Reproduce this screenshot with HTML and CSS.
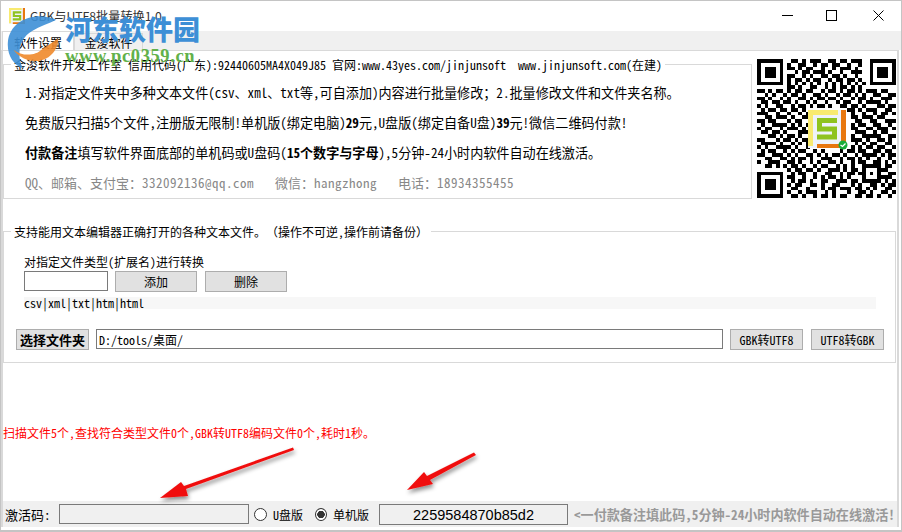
FILE: index.html
```html
<!DOCTYPE html>
<html lang="zh-CN">
<head>
  <meta charset="UTF-8" />
  <title>GBK与UTF8批量转换1.0</title>
  <link rel="stylesheet" href="styles.css">
</head>
<body>

  <svg class="defs" width="0" height="0">
    <symbol id="logoS" viewBox="0 0 38 38">
      <rect width="38" height="38" fill="#eef2fa"/>
      <path d="M0 0H30V5H5V36H0z" fill="#f8ea70"/>
      <path d="M33 0h5v38H9v-4H33z" fill="#e8770f"/>
      <path d="M29 10.5H11.5V19H26.5V27H9" fill="none" stroke="#8fc31f" stroke-width="5"/>
    </symbol>
  </svg>

  <div class="window">
    <div class="titlebar">
      <svg class="app-icon"><use href="#logoS"/></svg>
      <span class="app-title">GBK与UTF8批量转换1.0</span>
      <div class="win-btns">
        <svg class="win-btn" viewBox="0 0 12 12"><path d="M0 5.5h11" stroke="#000"/></svg>
        <svg class="win-btn" viewBox="0 0 12 12"><rect x="0.5" y="0.5" width="10" height="10" fill="none" stroke="#000"/></svg>
        <svg class="win-btn" viewBox="0 0 12 12"><path d="M0.5 0.5l10 10M10.5 0.5l-10 10" stroke="#000"/></svg>
      </div>
    </div>

    <div class="tabs">
      <div class="tab active">软件设置</div>
      <div class="tab">金浚软件</div>
    </div>

    <div class="panel">
      <div class="top-row">
        <fieldset class="group info">
          <legend>金浚软件开发工作室 信用代码(广东):92440605MA4X049J85 官网:www.43yes.com/jinjunsoft&nbsp; www.jinjunsoft.com(在建)</legend>
          <p>1.对指定文件夹中多种文本文件(csv、xml、txt等,可自添加)内容进行批量修改；2.批量修改文件和文件夹名称。</p>
          <p>免费版只扫描5个文件,注册版无限制!单机版(绑定电脑)<b>29</b>元,U盘版(绑定自备U盘)<b>39</b>元!微信二维码付款!</p>
          <p><b>付款备注</b>填写软件界面底部的单机码或U盘码(<b>15个数字与字母</b>),5分钟-24小时内软件自动在线激活。</p>
          <p class="contact">QQ、邮箱、支付宝：<span class="wide">332092136@qq.com&nbsp;&nbsp;&nbsp;</span>微信：<span class="wide">hangzhong&nbsp;&nbsp;&nbsp;</span>电话：<span class="wide">18934355455</span></p>
        </fieldset>
        <div class="qr">
          <svg class="qr-code" viewBox="0 0 37 37" shape-rendering="crispEdges"><path id="qrPath" d=""/></svg>
          <svg class="qr-logo"><use href="#logoS"/></svg>
          <svg class="qr-check" viewBox="0 0 10 10">
            <circle cx="5" cy="5" r="4.5" fill="#1aad3a"/>
            <path d="M2.5 5l2 1.5 3-3" fill="none" stroke="#fff" stroke-width="1.3"/>
          </svg>
        </div>
      </div>

      <fieldset class="group convert">
        <legend>支持能用文本编辑器正确打开的各种文本文件。（操作不可逆,操作前请备份）</legend>
        <div class="types">
          <div class="types-label">对指定文件类型(扩展名)进行转换</div>
          <div class="add-row">
            <input class="field ext-input" type="text" />
            <button class="btn add-btn">添加</button>
            <button class="btn add-btn">删除</button>
          </div>
          <div class="ext-list">csv|xml|txt|htm|html</div>
        </div>
        <div class="path-row">
          <button class="btn folder-btn">选择文件夹</button>
          <input class="field path-input" type="text" value="D:/tools/桌面/" />
          <button class="btn conv-btn">GBK转UTF8</button>
          <button class="btn conv-btn">UTF8转GBK</button>
        </div>
      </fieldset>

      <div class="status">扫描文件5个,查找符合类型文件0个,GBK转UTF8编码文件0个,耗时1秒。</div>

      <div class="footer">
        <span class="code-label">激活码:</span>
        <input class="field code-input" type="text" />
        <label class="radio-item"><input type="radio" name="ver" />U盘版</label>
        <label class="radio-item"><input type="radio" name="ver" checked />单机版</label>
        <div class="machine-code">2259584870b85d2</div>
        <span class="hint">&lt;一付款备注填此码,5分钟-24小时内软件自动在线激活!</span>
      </div>
    </div>
  </div>

  <!-- screenshot annotations lying over the window -->
  <svg class="arrows" viewBox="0 0 902 532">
    <defs>
      <filter id="arrowShadow" x="-20%" y="-20%" width="140%" height="150%">
        <feDropShadow dx="1" dy="3" stdDeviation="2" flood-color="#000" flood-opacity="0.45"/>
      </filter>
    </defs>
    <path filter="url(#arrowShadow)" fill="#f01010" d="M293 447.500L294 450L186 489L188 496L160 498L181 482L184 486z"/>
    <path filter="url(#arrowShadow)" fill="#f01010" d="M474 452.500L476 455L430 480L433 484L407 490L424 472L427 476z"/>
  </svg>

  <div class="watermark">
    <svg class="wm-logo" viewBox="0 0 60 70">
      <path fill="#3d8fd6" opacity="0.9" d="M54 8C32 -2 4 8 2 32C1 46 8 56 18 60C11 46 14 28 28 20C36 15 46 12 54 8z"/>
      <path fill="#ef8a2b" opacity="0.9" d="M56 28C56 42 44 54 28 52C20 51 12 46 8 40C18 48 32 46 38 40C44 36 50 32 56 28z"/>
    </svg>
    <div class="wm-text">
      <div class="wm-name">河东软件园</div>
      <div class="wm-url">www.pc0359.cn</div>
    </div>
  </div>

  <script src="qr.js"></script>
</body>
</html>
```

FILE: styles.css
```css
* {
  box-sizing: border-box;
}

body {
  margin: 0;
  width: 902px;
  height: 532px;
  overflow: hidden;
  position: relative;
  background: #fff;
  color: #000;
  font-family: "Noto Sans Mono CJK SC", "Noto Sans CJK SC", monospace;
  font-size: 12px;
  text-spacing-trim: space-all;
}

.defs {
  position: absolute;
}

.window {
  width: 902px;
  height: 532px;
  border: 1px solid #c4c4c4;
  border-bottom-width: 2px;
  display: flex;
  flex-direction: column;
}

.titlebar {
  height: 30px;
  flex: none;
  display: flex;
  align-items: center;
  padding-left: 8px;
}

.app-icon {
  width: 16px;
  height: 16px;
}

.app-title {
  margin-left: 5px;
  font-family: "Noto Sans CJK SC", sans-serif;
  font-size: 12.200px;
  color: #333;
}

.win-btns {
  margin-left: auto;
  display: flex;
  gap: 32px;
  padding-right: 16px;
}

.win-btn {
  width: 12px;
  height: 12px;
}

.win-btn:last-child {
  margin-left: 3px;
}

.tabs {
  height: 19px;
  flex: none;
  display: flex;
  background: #f0f0f0;
  padding-left: 1px;
}

.tab {
  width: 69px;
  margin-top: 2px;
  text-align: center;
  line-height: 17px;
  border: 1px solid #d9d9d9;
  border-bottom: none;
}

.tab.active {
  width: 72px;
  margin-top: 0;
  background: #fff;
  line-height: 21px;
}

.panel {
  flex: 1;
  display: flex;
  flex-direction: column;
  min-height: 0;
  margin: 0 2px 3px 0;
  border: 1px solid #d9d9d9;
  border-left-width: 2px;
  border-right-width: 2px;
  border-bottom: none;
  border-top-width: 1px;
}

.top-row {
  display: flex;
  align-items: flex-start;
  padding-top: 6px;
}

.group {
  margin: 0;
  padding: 0;
  min-width: 0;
  border: 1px solid #d9d9d9;
}

.group legend {
  margin-left: 7px;
  padding: 0 3px;
  line-height: 15px;
  white-space: nowrap;
}

.info {
  width: 749px;
  height: 142px;
  padding-top: 6px;
}

.info p {
  margin: 0;
  padding-left: 21px;
  height: 30px;
  line-height: 30px;
  font-size: 13.100px;
  white-space: nowrap;
}

.info .contact {
  font-size: 13px;
  color: #888;
  height: 29px;
  line-height: 29px;
}

.wide {
  letter-spacing: 0.500px;
}

.qr {
  position: relative;
  margin: 2px 0 0 5px;
  width: 139px;
  height: 139px;
  flex: none;
}

.qr-code {
  display: block;
  width: 139px;
  height: 139px;
}

.qr-logo {
  position: absolute;
  left: 51px;
  top: 51px;
  width: 38px;
  height: 38px;
}

.qr-check {
  position: absolute;
  left: 81px;
  top: 81px;
  width: 10px;
  height: 10px;
}

.convert {
  margin-top: 25px;
  width: 893px;
  padding: 15px 0 12px;
}

.types {
  margin: 0 19px 0 20px;
}

.types-label {
  line-height: 16px;
}

.field {
  border: 1px solid #7a7a7a;
  background: #fff;
  font: inherit;
  padding: 0 2px;
  border-radius: 0;
  outline: none;
}

.btn {
  border: 1px solid #adadad;
  background: #e1e1e1;
  color: #000;
  font: inherit;
  padding: 0;
  border-radius: 0;
}

.add-row {
  margin-top: 1px;
  display: flex;
  height: 21px;
  gap: 8px;
}

.ext-input {
  width: 84px;
  height: 20px;
  margin-right: -1px;
}

.add-btn {
  width: 82px;
}

.ext-list {
  margin-top: 5px;
  height: 12px;
  line-height: 12px;
  background: #f7f7f7;
}

.path-row {
  margin: 20px 11px 0 12px;
  display: flex;
  height: 21px;
  gap: 7px;
}

.folder-btn {
  width: 73px;
  font-size: 13px;
  font-weight: bold;
}

.path-input {
  flex: 1;
  height: 20px;
  min-width: 0;
}

.conv-btn {
  width: 73px;
}

.conv-btn:last-child {
  margin-left: 1px;
}

.status {
  margin-top: 62px;
  line-height: 16px;
  color: #f00;
  white-space: nowrap;
}

.footer {
  margin-top: auto;
  height: 26px;
  background: #f0f0f0;
  display: flex;
  align-items: center;
  padding-left: 2px;
  white-space: nowrap;
}

.code-label {
  width: 54px;
  font-size: 13px;
}

.code-input {
  width: 190px;
  height: 20px;
  background: #f0f0f0;
}

.radio-item {
  display: flex;
  align-items: center;
  margin-left: 5px;
  width: 61px;
}

.radio-item + .radio-item {
  margin-left: 0;
  width: 54px;
}

.radio-item input {
  appearance: none;
  width: 13px;
  height: 13px;
  margin: 0 6px 0 0;
  border: 1px solid #333;
  border-radius: 50%;
  background: #fff;
}

.radio-item input:checked {
  background: radial-gradient(circle, #333 0 3.5px, #fff 4px);
}

.machine-code {
  margin-left: 10px;
  width: 189px;
  height: 21px;
  border: 1px solid #7a7a7a;
  text-align: center;
  line-height: 20px;
  font-family: "Liberation Sans", sans-serif;
  font-size: 14.500px;
}

.hint {
  margin-left: 6px;
  font-size: 13.100px;
  font-weight: bold;
  color: #999;
}

.arrows {
  position: absolute;
  left: 0;
  top: 0;
  width: 902px;
  height: 532px;
  pointer-events: none;
}

.watermark {
  position: absolute;
  left: 6px;
  top: 12px;
  display: flex;
  pointer-events: none;
}

.wm-logo {
  width: 56px;
  height: 66px;
}

.wm-text {
  margin-left: 3px;
  font-family: "Liberation Serif", "Noto Sans CJK SC", serif;
  font-weight: bold;
}

.wm-name {
  font-family: "Noto Sans CJK SC", sans-serif;
  font-weight: 900;
  font-size: 27px;
  line-height: 34px;
  color: #3d8fd6;
}

.wm-url {
  font-size: 18.500px;
  line-height: 20px;
  letter-spacing: 0.600px;
  color: #62b14a;
}
```

FILE: qr.js
```js
// qr modules, 1 = dark. groups are left finder / middle / right finder
const rows = [
  "1111111 00110101110011011011100 1111111",
  "1000001 01001100101101100100100 1000001",
  "1011101 01101011001001011101000 1011101",
  "1011101 00010110111010010011100 1011101",
  "1011101 01100101001101101001000 1011101",
  "1000001 01011010110010110110100 1000001",
  "1111111 01010101010101010101010 1111111",
  "0000000 01101001100101011010100 0000000",
  "1101011 01011011001011010110101 1101100",
  "0010100 10110100110100101101010 0110011",
  "1101001 01001101011011010010110 1001110",
  "0110110 11010010100100101100101 1110100",
  "1010011 00101101011010011011010 0011011",
  "0101101 10110100000000000110101 1100110",
  "1110010 01001011000000000010010 0101101",
  "0011011 10100110000000000011011 1011000",
  "1101100 01011000000000000001100 1100111",
  "0100111 10101010000000000010110 0110010",
  "1011001 01110100000000000011001 1011101",
  "0110110 10001110000000000001110 0101100",
  "0001101 01101000000000000010011 1110011",
  "1100010 11010110000000000011101 0011010",
  "0111101 00101010000000000001010 1100110",
  "1010011 11010010000000000010101 1011001",
  "0101100 10101100101000010110110 0110110",
  "1100111 01010011010101101001011 1101011",
  "0011001 10101101001110010110101 0010010",
  "1001110 01101001010011010010110 0110101",
  "0011010 101101001011001010100 11 111 0110",
  "00000000 10110110100111010110 10001 1100",
  "11111110 01011001001100101101 10101 0011",
  "10000010 11001001010110101000 10001 1110",
  "10111010 01011010011001110110 11111 0101",
  "10111010 10110011010011000101 00110 1011",
  "10111010 01100100010110111011 01010 0110",
  "10000010 10010111001010001001 10100 1101",
  "11111110 01101001011010110011 01101 0010"
];

let d = "";
rows.forEach((row, y) => {
  for (const m of row.replace(/ /g, "").matchAll(/1+/g)) {
    d += `M${m.index} ${y}h${m[0].length}v1h-${m[0].length}z`;
  }
});
document.getElementById("qrPath").setAttribute("d", d);
```
